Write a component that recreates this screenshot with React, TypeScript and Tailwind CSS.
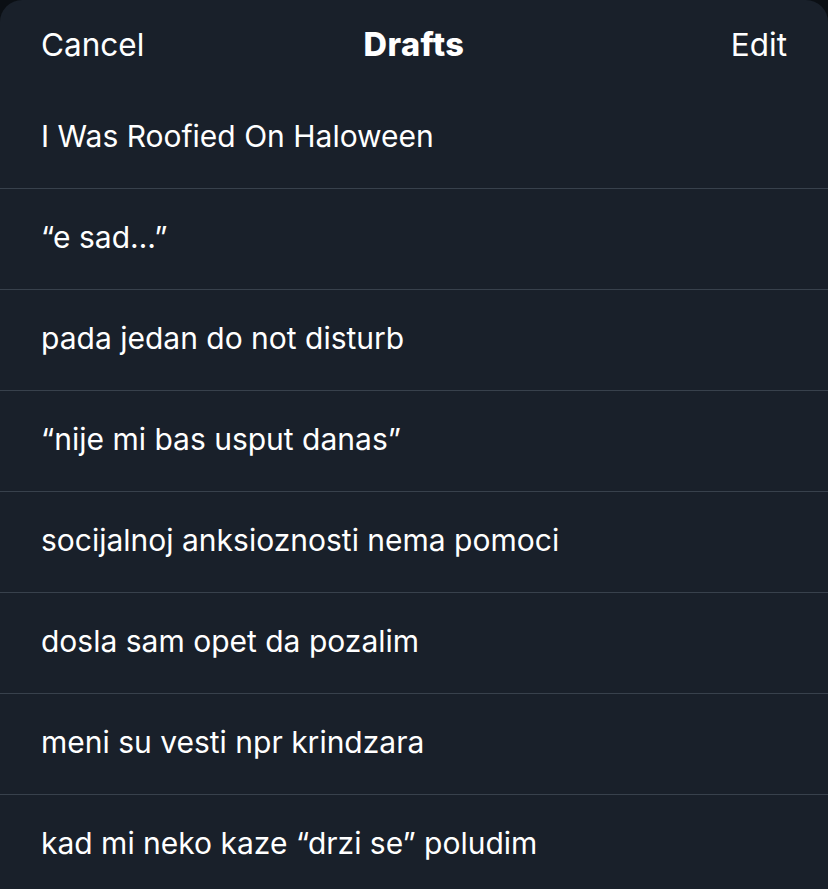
const drafts = [
	'I Was Roofied On Haloween',
	'“e sad…”',
	'pada jedan do not disturb',
	'“nije mi bas usput danas”',
	'socijalnoj anksioznosti nema pomoci',
	'dosla sam opet da pozalim',
	'meni su vesti npr krindzara',
	'kad mi neko kaze “drzi se” poludim',
];

export default function App() {
	return (
		<div className="h-[889px] w-[828px] overflow-hidden bg-[#0b0f14] font-['Inter',sans-serif] text-white">
			<div className="h-full rounded-t-[22px] bg-[#19202a]">
				<header className="grid h-[88px] grid-cols-3 items-center px-[41px] pt-[2px] text-[31.5px]">
					<span className="justify-self-start">Cancel</span>
					<span className="justify-self-center text-[32.5px] font-extrabold tracking-[0.4px]">Drafts</span>
					<span className="justify-self-end">Edit</span>
				</header>
				<ul>
					{drafts.map((d, i) => (
						<li
							key={i}
							className="flex h-[101px] items-center border-b border-[#38414c] px-[41px] pb-[4px] text-[30px]"
						>
							{d}
						</li>
					))}
				</ul>
			</div>
		</div>
	);
}
